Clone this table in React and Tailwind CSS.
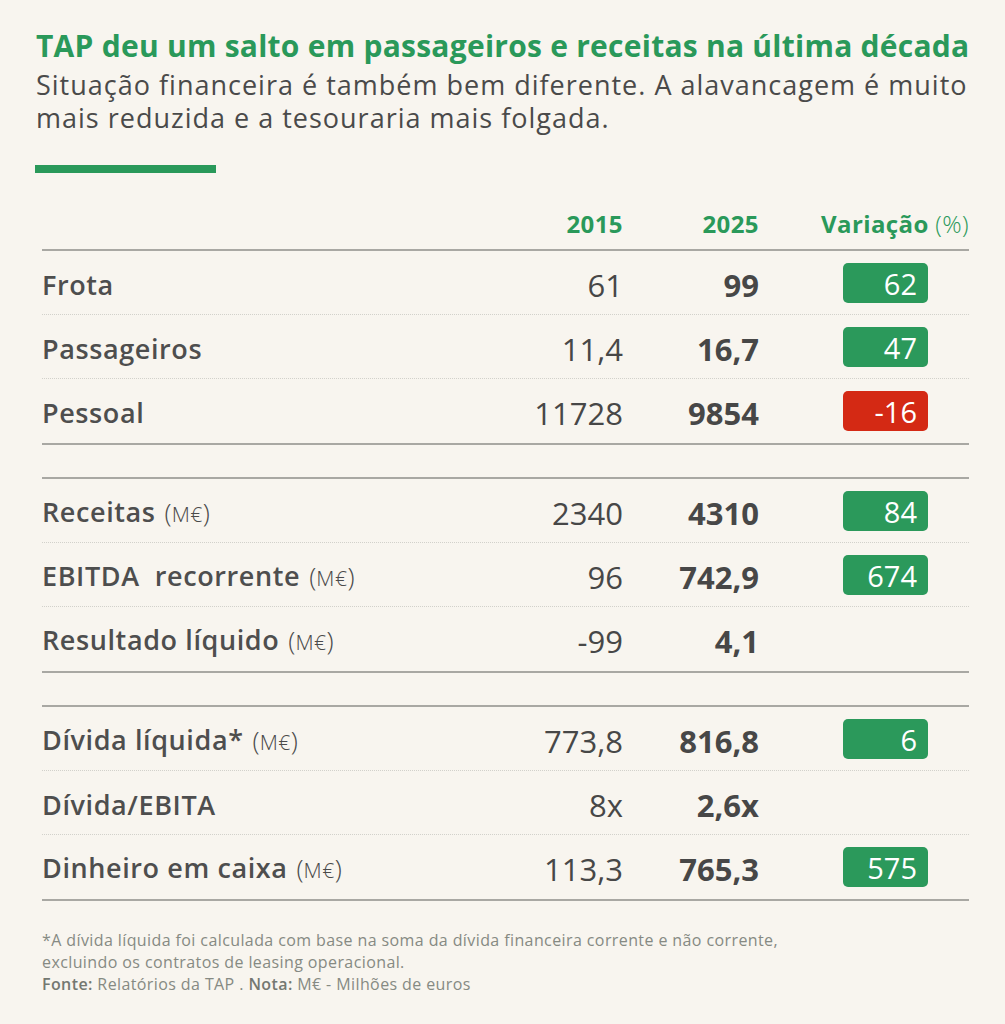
import React from "react";

const groups = [
  [
    { label: "Frota", a: "61", b: "99", v: "62", tone: "up" },
    { label: "Passageiros", a: "11,4", b: "16,7", v: "47", tone: "up" },
    { label: "Pessoal", a: "11728", b: "9854", v: "-16", tone: "down" },
  ],
  [
    { label: "Receitas", unit: true, a: "2340", b: "4310", v: "84", tone: "up" },
    { label: "EBITDA\u00a0 recorrente", unit: true, a: "96", b: "742,9", v: "674", tone: "up" },
    { label: "Resultado líquido", unit: true, a: "-99", b: "4,1" },
  ],
  [
    { label: "Dívida líquida*", unit: true, a: "773,8", b: "816,8", v: "6", tone: "up" },
    { label: "Dívida/EBITA", a: "8x", b: "2,6x" },
    { label: "Dinheiro em caixa", unit: true, a: "113,3", b: "765,3", v: "575", tone: "up" },
  ],
];

// "(M€)" with tall parens and a smaller unit
const Unit = () => (
  <span className="ml-[9px] font-light text-[26px] tracking-normal text-[#4a4a4a]">
    (<span className="text-[21px] tracking-[0.5px]">M€</span>)
  </span>
);

const Row = ({ row, last }) => (
  <div
    className={
      "grid grid-cols-[1fr_120px_136px_210px] items-center h-[64px] text-[#474747] " +
      (last ? "" : "border-b border-dotted border-[#d2d1cb]")
    }
  >
    <div className="text-[27px] leading-[40px] font-semibold text-[#4e4e4e] tracking-[0.6px] pt-[4px]">
      {row.label}
      {row.unit && <Unit />}
    </div>
    <div className="text-right text-[31px] leading-[40px] font-normal pt-[4px]">{row.a}</div>
    <div className="text-right text-[31px] leading-[40px] font-bold pt-[4px]">{row.b}</div>
    <div className="flex justify-end pr-[41px]">
      {row.v && (
        <div
          className={
            "w-[85px] h-[40px] rounded-[5px] flex items-center justify-end pr-[11px] pt-[2px] text-white text-[29px] font-normal " +
            (row.tone === "down" ? "bg-[#d42914]" : "bg-[#2b995b]")
          }
        >
          {row.v}
        </div>
      )}
    </div>
  </div>
);

export default function App() {
  return (
    <div
      className="w-[1005px] h-[1024px] bg-[#f8f5ef] pt-[28px] pl-[36px] pr-[36px]"
      style={{ fontFamily: "'Open Sans', 'Noto Sans', sans-serif" }}
    >
      <h1 className="text-[30px] leading-[36px] font-bold text-[#2a995a] tracking-[0.25px] whitespace-nowrap">
        TAP deu um salto em passageiros e receitas na última década
      </h1>
      <p className="mt-[4px] text-[27px] leading-[33px] text-[#4a4a4a] font-normal tracking-[1px] whitespace-nowrap">
        Situação financeira é também bem diferente. A alavancagem é muito
        <br />
        mais reduzida e a tesouraria mais folgada.
      </p>
      <div className="mt-[31px] w-[181px] h-[8px] bg-[#2a995a] -ml-px" />

      <div className="ml-[6px] mt-[36px]">
        <div className="grid grid-cols-[1fr_120px_136px_210px] items-end pb-[10px] border-b-2 border-[#a9a8a3] text-[24px] leading-[30px] font-bold tracking-[0.4px] text-[#2a995a]">
          <div />
          <div className="text-right">2015</div>
          <div className="text-right">2025</div>
          <div className="text-right">
            Variação <span className="font-light">(%)</span>
          </div>
        </div>

        {groups.map((g, gi) => (
          <div
            key={gi}
            className={
              "border-b-2 border-[#a9a8a3] " + (gi > 0 ? "border-t-2 mt-[32px]" : "")
            }
          >
            {g.map((row, ri) => (
              <Row key={ri} row={row} last={ri === g.length - 1} />
            ))}
          </div>
        ))}

        <div className="mt-[28px] text-[16px] leading-[22px] tracking-[0.4px] text-[#868a83]">
          <p>
            *A dívida líquida foi calculada com base na soma da dívida financeira corrente e não corrente,
            <br />
            excluindo os contratos de leasing operacional.
          </p>
          <p>
            <span className="font-semibold text-[#747871]">Fonte:</span> Relatórios da TAP .{" "}
            <span className="font-semibold text-[#747871]">Nota:</span> M€ - Milhões de euros
          </p>
        </div>
      </div>
    </div>
  );
}
